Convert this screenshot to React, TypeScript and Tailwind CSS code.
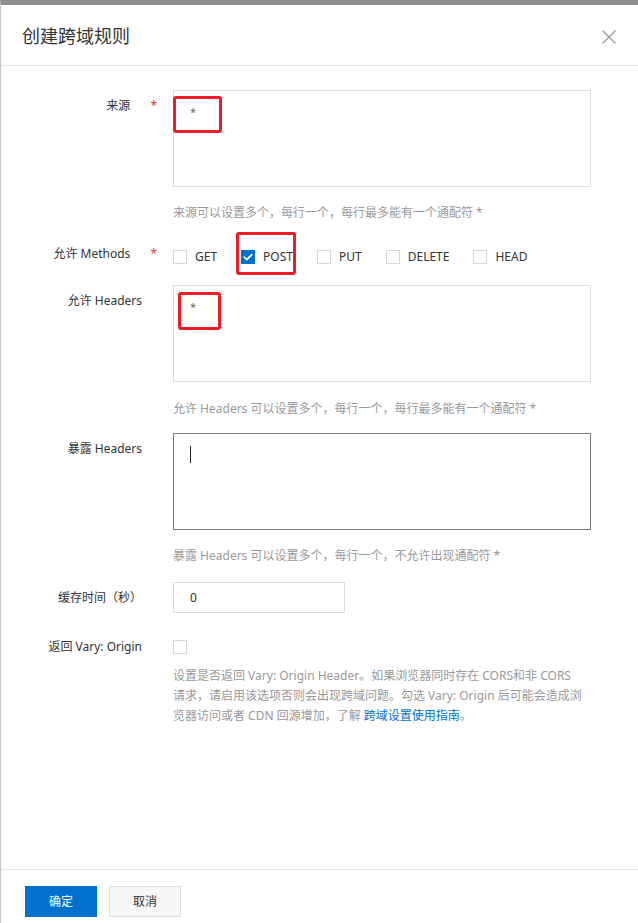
import type { ReactNode } from "react";

const font = { fontFamily: '"Noto Sans", "Noto Sans CJK SC", sans-serif' };

function Label({ text, required, className = "" }: { text: string; required?: boolean; className?: string }) {
  return (
    <div
      className={`w-[172px] shrink-0 text-right text-[12px] leading-[16px] text-[#333] ${
        required ? "pr-[16px]" : "pr-[31px]"
      } ${className}`}
    >
      {text}
      {required && <span className="ml-[20px] text-[#e3353a]">*</span>}
    </div>
  );
}

function Help({ children, className = "" }: { children: ReactNode; className?: string }) {
  return <div className={`text-[12px] leading-[18px] text-[#999] ${className}`}>{children}</div>;
}

function Box({ checked }: { checked?: boolean }) {
  return checked ? (
    <span className="flex h-[14px] w-[14px] items-center justify-center bg-[#0070cc]">
      <svg viewBox="0 0 14 14" className="h-[14px] w-[14px]" fill="none" stroke="white" strokeWidth={1.8}>
        <path d="M3.2 7.2l2.6 2.5 5-5" strokeLinecap="round" strokeLinejoin="round" />
      </svg>
    </span>
  ) : (
    <span className="block h-[14px] w-[14px] border border-[#d7d7d7] bg-white" />
  );
}

const methods = ["GET", "POST", "PUT", "DELETE", "HEAD"];

export default function App() {
  return (
    <div
      style={font}
      className="flex h-[923px] w-full flex-col overflow-hidden border-l border-t-[5px] border-l-[#c6c6c6] border-t-[#8e8e8e] bg-white"
    >
      {/* header */}
      <div className="flex h-[61px] shrink-0 items-center justify-between border-b border-[#e6e6e6] pl-[21px] pr-[21px] pt-[3px]">
        <span className="text-[18px] text-[#333]">创建跨域规则</span>
        <svg viewBox="0 0 16 16" className="h-[16px] w-[16px]" fill="none" stroke="#999" strokeWidth={1.3}>
          <path d="M1.5 1.5l13 13M14.5 1.5l-13 13" />
        </svg>
      </div>

      <div className="flex flex-col pt-[24px]">
        {/* 来源 */}
        <div className="flex">
          <Label text="来源" required className="pt-[8px]" />
          <div className="w-[418px]">
            <div className="relative h-[97px] border border-[#dcdcdc] pl-[16px] pt-[12px] text-[11px] leading-[18px] text-[#666]">
              *
              <div className="absolute -left-px top-[5px] h-[37px] w-[49px] rounded-[3px] border-[3px] border-[#ee1c25]" />
            </div>
            <Help className="mt-[17px]">来源可以设置多个，每行一个，每行最多能有一个通配符 *</Help>
          </div>
        </div>

        {/* Methods */}
        <div className="mt-[23px] flex">
          <Label text="允许 Methods" required className="pt-[1px]" />
          <div className="mt-[4px] flex h-[16px] items-center gap-x-[24px]">
            {methods.map((m) => (
              <label key={m} className="relative flex items-center gap-[8px] text-[12px] text-[#333]">
                <Box checked={m === "POST"} />
                <span>{m}</span>
                {m === "POST" && (
                  <span className="absolute -left-[5px] -top-[16px] h-[43px] w-[60px] rounded-[3px] border-[3px] border-[#ee1c25]" />
                )}
              </label>
            ))}
          </div>
        </div>

        {/* 允许 Headers */}
        <div className="mt-[20px] flex">
          <Label text="允许 Headers" className="pt-[8px]" />
          <div className="w-[418px]">
            <div className="relative h-[97px] border border-[#dcdcdc] pl-[16px] pt-[12px] text-[11px] leading-[18px] text-[#666]">
              *
              <div className="absolute left-[4px] top-[6px] h-[38px] w-[43px] rounded-[3px] border-[3px] border-[#ee1c25]" />
            </div>
            <Help className="mt-[18px]">允许 Headers 可以设置多个，每行一个，每行最多能有一个通配符 *</Help>
          </div>
        </div>

        {/* 暴露 Headers */}
        <div className="mt-[15px] flex">
          <Label text="暴露 Headers" className="pt-[8px]" />
          <div className="w-[418px]">
            <div className="h-[97px] border border-[#7a7a7a] pl-[16px] pt-[12px]">
              <div className="h-[17px] w-px bg-[#222]" />
            </div>
            <Help className="mt-[17px]">暴露 Headers 可以设置多个，每行一个，不允许出现通配符 *</Help>
          </div>
        </div>

        {/* 缓存时间 */}
        <div className="mt-[17px] flex">
          <Label text="缓存时间（秒）" className="pt-[8px]" />
          <div className="flex h-[31px] w-[172px] items-center border border-[#dcdcdc] pl-[16px] text-[12px] text-[#333]">
            0
          </div>
        </div>

        {/* Vary */}
        <div className="mt-[25px] flex">
          <Label text="返回 Vary: Origin" className="pt-[1px]" />
          <div className="w-[418px]">
            <div className="mt-[2px]">
              <Box />
            </div>
            <div className="mt-[12px] text-[12px] leading-[20px] text-[#999]">
              <div>设置是否返回 Vary: Origin Header。如果浏览器同时存在 CORS和非 CORS</div>
              <div>请求，请启用该选项否则会出现跨域问题。勾选 Vary: Origin 后可能会造成浏</div>
              <div>
                览器访问或者 CDN 回源增加，了解 <a className="text-[#0070cc]">跨域设置使用指南</a>。
              </div>
            </div>
          </div>
        </div>
      </div>

      {/* footer */}
      <div className="mt-auto flex gap-[12px] border-t border-[#e6e6e6] pb-[6px] pl-[24px] pt-[16px]">
        <button className="h-[31px] w-[72px] bg-[#0070cc] text-[12px] text-white">确定</button>
        <button className="h-[31px] w-[72px] border border-[#dcdcdc] bg-[#f7f7f7] text-[12px] text-[#333]">
          取消
        </button>
      </div>
    </div>
  );
}
